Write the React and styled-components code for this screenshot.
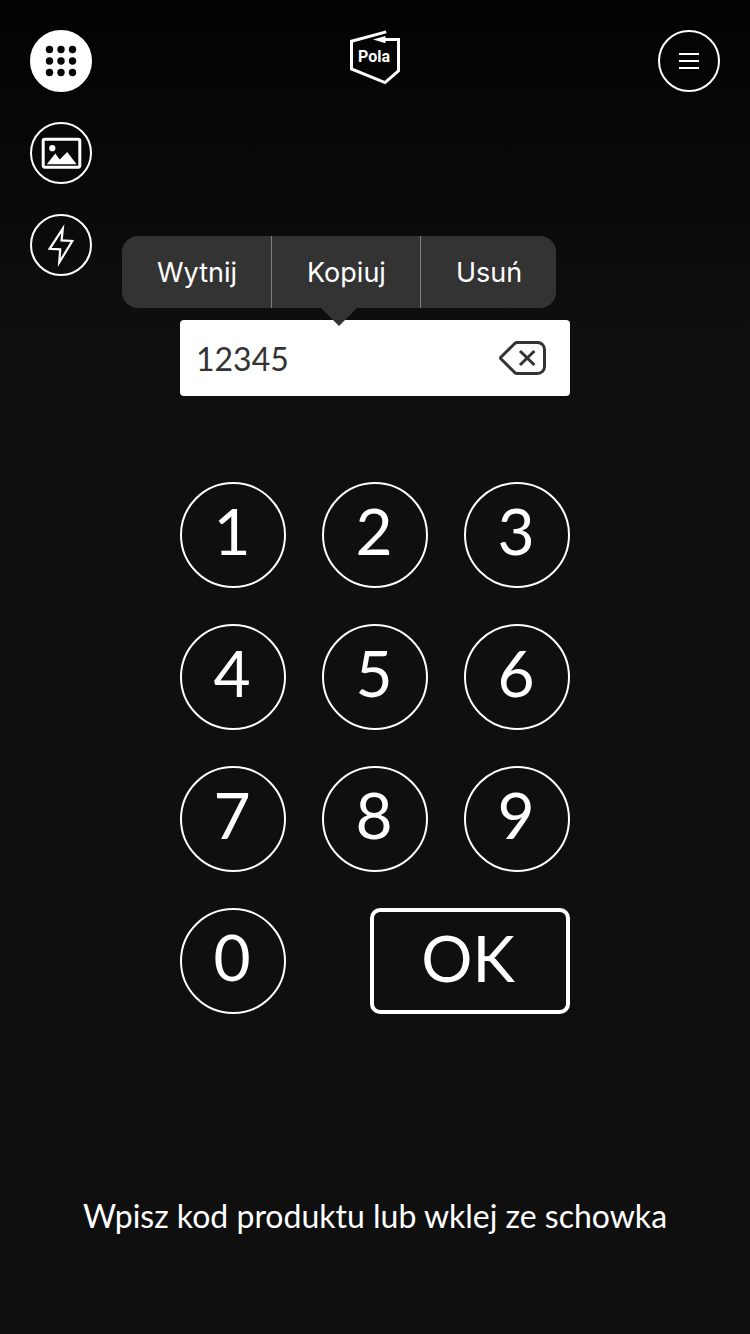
import React, { useState } from "react";
import styled, { createGlobalStyle } from "styled-components";

const GlobalStyle = createGlobalStyle`
  *, *::before, *::after { box-sizing: border-box; }
  body {
    margin: 0;
    background: #0f0f0f;
    color: #fff;
    font-family: Lato, "Open Sans", sans-serif;
  }
  button, input { font: inherit; color: inherit; }
`;

const Screen = styled.div`
  display: flex;
  flex-direction: column;
  min-height: 100vh;
  background: linear-gradient(#020202, #0f0f0f 340px);
`;

const Header = styled.header`
  display: grid;
  grid-template-columns: 1fr auto 1fr;
  align-items: start;
  padding: 30px 30px 0;
`;

const Tools = styled.nav`
  display: flex;
  flex-direction: column;
  gap: 30px;
`;

const RoundButton = styled.button`
  display: block;
  width: 62px;
  height: 62px;
  padding: 0;
  border: 2px solid #fff;
  border-radius: 50%;
  background: ${(p) => (p.$active ? "#fff" : "transparent")};
  color: ${(p) => (p.$active ? "#050505" : "#fff")};
  justify-self: end;
  cursor: pointer;

  svg { display: block; }
`;

const Logo = styled.svg`
  display: block;
  font-family: Roboto, "Noto Sans", sans-serif;
  font-size: 16px;
  font-weight: 700;
`;

const Main = styled.main`
  display: flex;
  flex-direction: column;
  align-items: center;
  flex: 1;
  padding: 44px 30px 94px;
`;

const Field = styled.div`
  position: relative;
  display: flex;
  align-items: center;
  width: 390px;
  height: 76px;
  padding: 0 22px 0 16px;
  border-radius: 4px;
  background: #fff;
  color: #333;
`;

const CodeInput = styled.input`
  flex: 1;
  min-width: 0;
  padding: 2px 0 0;
  border: 0;
  outline: 0;
  background: transparent;
  font-size: 32px;
  line-height: 40px;
`;

const ClearButton = styled.button`
  padding: 0;
  border: 0;
  background: transparent;
  cursor: pointer;

  svg { display: block; }
`;

const EditMenu = styled.div`
  position: absolute;
  left: -58px;
  bottom: 88px;
  display: flex;
  height: 72px;
  border-radius: 16px;
  background: #333;
  color: #fff;
  font-family: Inter, sans-serif;

  &::after {
    content: "";
    position: absolute;
    top: 100%;
    left: 50%;
    margin-left: -18px;
    border: 18px solid transparent;
    border-top-color: #333;
    border-bottom: 0;
  }
`;

const EditAction = styled.button`
  padding: 2px 34px 0 35px;
  border: 0;
  background: transparent;
  font-size: 27px;
  line-height: 36px;
  cursor: pointer;

  & + & { border-left: 1px solid #808080; }
`;

const Keypad = styled.div`
  display: flex;
  flex-wrap: wrap;
  justify-content: space-between;
  gap: 36px;
  width: 390px;
  margin-top: 86px;
`;

const Key = styled.button`
  width: ${(p) => (p.$wide ? 200 : 106)}px;
  height: 106px;
  padding: ${(p) => (p.$wide ? "0 4px 6px 0" : "0 2px 8px 0")};
  border: ${(p) => (p.$wide ? 4 : 2)}px solid #fff;
  border-radius: ${(p) => (p.$wide ? "10px" : "50%")};
  background: transparent;
  font-size: 64px;
  line-height: 76px;
  cursor: pointer;
`;

const Hint = styled.p`
  margin: auto 0 0;
  font-size: 32px;
  line-height: 48px;
  text-align: center;
`;

const DOTS = [19.5, 31, 42.5];

function RoundIcon({ children }) {
  return (
    <svg width="58" height="58" viewBox="2 2 58 58" fill="none" stroke="currentColor" aria-hidden="true">
      {children}
    </svg>
  );
}

function PolaLogo() {
  return (
    <Logo width="50" height="56" viewBox="0 0 50 56" role="img" aria-label="Pola">
      <path d="M36.2 1.9 1.5 11.2V39L35 52.6 48.5 40.8V9.5H34" fill="none" stroke="#fff" strokeWidth="3" />
      <path d="M23 9.5 35.5 6v7.2Z" fill="#fff" />
      <text x="8" y="32" fill="#fff">Pola</text>
    </Logo>
  );
}

export default function App() {
  const [code, setCode] = useState("12345");
  const press = (digit) => setCode((value) => value + digit);

  return (
    <>
      <GlobalStyle />
      <Screen>
        <Header>
          <Tools aria-label="Tryb">
            <RoundButton $active aria-label="Klawiatura">
              <RoundIcon>
                {DOTS.map((y) =>
                  DOTS.map((x) => (
                    <circle key={`${x}-${y}`} cx={x} cy={y} r="3.7" fill="currentColor" stroke="none" />
                  ))
                )}
              </RoundIcon>
            </RoundButton>
            <RoundButton aria-label="Galeria">
              <RoundIcon>
                <rect x="13.2" y="17.2" width="36.6" height="28" rx="1.6" strokeWidth="3" />
                <circle cx="22.3" cy="26.2" r="3.1" fill="currentColor" stroke="none" />
                <path d="M16.8 42.2 25.3 31.5 29.7 37.5 37.2 30 46.6 42.2Z" fill="currentColor" stroke="none" />
              </RoundIcon>
            </RoundButton>
            <RoundButton aria-label="Latarka">
              <RoundIcon>
                <path d="M32.8 14.6 19.6 34.8 30.2 35.4 29.2 48.6 42.3 27 31.6 26.4Z" strokeWidth="2.2" strokeMiterlimit="10" />
              </RoundIcon>
            </RoundButton>
          </Tools>
          <PolaLogo />
          <RoundButton aria-label="Menu">
            <RoundIcon>
              <path d="M21 24h20M21 31h20M21 38h20" strokeWidth="2" />
            </RoundIcon>
          </RoundButton>
        </Header>

        <Main>
          <Field>
            <CodeInput
              aria-label="Kod produktu"
              inputMode="numeric"
              value={code}
              onChange={(e) => setCode(e.target.value)}
            />
            <ClearButton aria-label="Skasuj" onClick={() => setCode((value) => value.slice(0, -1))}>
              <svg width="50" height="36" viewBox="0 0 50 36" fill="none" stroke="#333" strokeWidth="3" aria-hidden="true">
                <path d="M19 2.5h20.5a7 7 0 0 1 7 7v17a7 7 0 0 1-7 7H19c-1 0-1.6-.4-2.3-1L3.1 19c-.8-.7-.8-1.3 0-2L16.7 3.5c.7-.6 1.3-1 2.3-1Z" />
                <path d="M22 11 36.4 25M36.4 11 22 25" />
              </svg>
            </ClearButton>
            <EditMenu role="toolbar" aria-label="Edycja">
              <EditAction>Wytnij</EditAction>
              <EditAction>Kopiuj</EditAction>
              <EditAction>Usuń</EditAction>
            </EditMenu>
          </Field>

          <Keypad>
            {["1", "2", "3", "4", "5", "6", "7", "8", "9", "0"].map((digit) => (
              <Key key={digit} onClick={() => press(digit)}>{digit}</Key>
            ))}
            <Key $wide>OK</Key>
          </Keypad>

          <Hint>Wpisz kod produktu lub wklej ze schowka</Hint>
        </Main>
      </Screen>
    </>
  );
}
